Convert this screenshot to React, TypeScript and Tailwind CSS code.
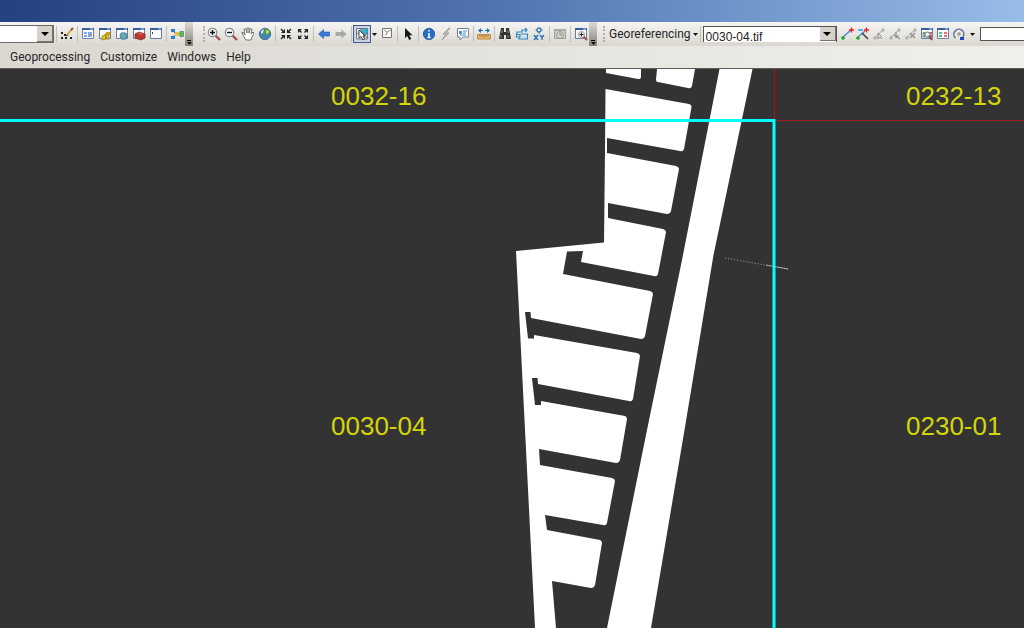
import type { ReactNode } from "react"

interface IconProps {
	children: ReactNode
}

interface ToolProps {
	label: string
	children: ReactNode
	active?: boolean
}

// ** Shared pieces
const Icon = ({ children }: IconProps) => (
	<svg viewBox="0 0 16 16" className="block h-4 w-4" fill="none" aria-hidden="true">
		{children}
	</svg>
)

const Tool = ({ label, children, active }: ToolProps) => (
	<button
		type="button"
		aria-label={label}
		className={
			active
				? "flex h-4 w-4 shrink-0 items-center justify-center bg-[#cbd3e4] outline outline-[#425c93]"
				: "flex h-4 w-4 shrink-0 items-center justify-center hover:bg-[#cbd3e4]"
		}>
		<Icon>{children}</Icon>
	</button>
)

const Separator = () => (
	<span className="flex h-4 w-[3px] shrink-0 justify-center">
		<span className="w-px bg-[#c2bfb8]" />
	</span>
)

const Grip = () => (
	<span className="h-4 w-0 shrink-0 border-l-2 border-dotted border-[#b4b1aa]" />
)

const Caret = () => (
	<svg viewBox="0 0 5 3" className="block h-[3px] w-[5px]" aria-hidden="true">
		<path d="M0 0H5L2.5 3Z" fill="#111" />
	</svg>
)

const ToolbarEnd = () => (
	<button
		type="button"
		aria-label="Toolbar options"
		className="flex h-6 w-2 shrink-0 flex-col items-center justify-end gap-px bg-linear-to-b from-[#dedbd5] to-[#85827c] pb-px">
		<span className="h-px w-1 bg-black" />
		<Caret />
	</button>
)

const ComboArrow = () => (
	<span className="pointer-events-none absolute inset-y-px right-px flex w-4 items-center justify-center border-r border-b border-[#77736c] bg-[#d6d2ca]">
		<svg viewBox="0 0 8 4" className="h-1 w-2" aria-hidden="true">
			<path d="M0 0H8L4 4Z" fill="#000" />
		</svg>
	</span>
)

// Small window frame used by several tools
const WindowFrame = () => (
	<>
		<path d="M2.5 2.5H13.5V12.5H2.5Z" fill="#fbfcff" stroke="#6e7d99" />
		<path d="M2 2H14V4H2Z" fill="#345da5" />
		<path d="M10 3H13" stroke="#b9d0f5" />
	</>
)

const Magnifier = ({ children }: IconProps) => (
	<>
		<path d="M9.5 9.5L14 14" stroke="#a4504a" strokeWidth="2.4" />
		<circle cx="6.5" cy="6.5" r="4.2" fill="#f7f9fb" stroke="#8b8e93" strokeWidth="1.3" />
		{children}
	</>
)

const Main = () => (
	<div className="flex items-center">
		<div className="relative h-[18px] w-[54px]">
			<select
				aria-label="Map scale"
				className="block h-full w-full appearance-none border border-l-0 border-[#6c6963] bg-white text-xs">
				<option></option>
			</select>
			<ComboArrow />
		</div>
		<div className="ml-px flex items-center gap-px">
			<Separator />
			<Tool label="Editor Toolbar">
				<path d="M2 6H4V8H2ZM2 11H4V13H2ZM6 11H8V13H6ZM11 11H13V13H11ZM5 8H7V10H5Z" fill="#222" />
				<path d="M8 9L13 3" stroke="#dca64b" strokeWidth="2" />
				<path d="M12 4L14 2" stroke="#a54841" strokeWidth="2" />
				<path d="M7 10L9 9" stroke="#333" />
			</Tool>
			<Separator />
			<Tool label="Table Of Contents">
				<WindowFrame />
				<path d="M4 7H7M8 7H12M4 10H7M8 10H12" stroke="#4c8cdf" strokeWidth="1.4" />
				<path d="M8 8.5H12" stroke="#d88a84" />
			</Tool>
			<Tool label="Catalog">
				<WindowFrame />
				<path d="M5 10L9 8V13L5 14ZM9 7H12V13H9Z" fill="#e5c42d" stroke="#8b7112" strokeWidth=".7" />
				<path d="M9 6H13V9H9Z" fill="#c9a119" />
			</Tool>
			<Tool label="Search">
				<WindowFrame />
				<circle cx="9.5" cy="10" r="3.6" fill="#4f9dd2" stroke="#5a7d8c" strokeWidth=".7" />
				<path d="M8 9L10 8L11 10L9 12Z" fill="#7fc06e" />
			</Tool>
			<Tool label="ArcToolbox">
				<WindowFrame />
				<path d="M4 8L8 6L14 8V12L10 14L4 12Z" fill="#b93832" stroke="#77201e" strokeWidth=".7" />
				<path d="M7 8L8 7L11 8V9" stroke="#ef8b83" strokeWidth=".8" />
			</Tool>
			<Tool label="Python">
				<WindowFrame />
				<path d="M4 6L5 7L4 8" stroke="#111" strokeWidth=".8" />
			</Tool>
			<Separator />
			<Tool label="ModelBuilder">
				<path d="M4 5L7 8H11M4 12L7 8" stroke="#555" />
				<path d="M2 3H6V6H2ZM2 10H6V13H2Z" fill="#2f7bd0" />
				<path d="M6 6H10V10H6Z" fill="#e2c63b" />
				<path d="M11 5.5H14.5V10.5H11Z" fill="#61ba69" stroke="#27803a" strokeWidth=".6" />
			</Tool>
		</div>
	</div>
)

const Tools = () => (
	<div className="flex items-center gap-px">
		<Grip />
		<Tool label="Zoom In">
			<Magnifier>
				<path d="M4 6.5H9M6.5 4V9" stroke="#111" strokeWidth="1.4" />
			</Magnifier>
		</Tool>
		<Tool label="Zoom Out">
			<Magnifier>
				<path d="M4 6.5H9" stroke="#111" strokeWidth="1.4" />
			</Magnifier>
		</Tool>
		<Tool label="Pan">
			<path
				d="M6 14L3 9L2 6L4 7L5 9L4 3L6 3L7 7V2H9V7L10 3H12L11 8L13 6L14 7L12 11L11 14Z"
				fill="#fff"
				stroke="#666"
				strokeWidth=".9"
			/>
		</Tool>
		<Tool label="Full Extent">
			<circle cx="8" cy="8" r="5.7" fill="#3f80cc" stroke="#31628f" strokeWidth=".8" />
			<path d="M7 3L12 3L13 7L10 10L8 8L5 7ZM3 9L7 11L8 13L5 12Z" fill="#4b9e49" />
			<path d="M4 5L7 3L6 7L4 8Z" fill="#d3eaff" />
			<path d="M9 4L12 5L11 8L9 7Z" fill="#e2d06c" />
		</Tool>
		<Separator />
		<Tool label="Fixed Zoom In">
			<path d="M3 3L6 6M13 3L10 6M3 13L6 10M13 13L10 10" stroke="#222" strokeWidth="1.4" />
			<path d="M7 3V7H3ZM9 3V7H13ZM7 13V9H3ZM9 13V9H13Z" fill="#222" />
		</Tool>
		<Tool label="Fixed Zoom Out">
			<path d="M4 4L6.5 6.5M12 4L9.5 6.5M4 12L6.5 9.5M12 12L9.5 9.5" stroke="#222" strokeWidth="1.4" />
			<path d="M3 3H7L3 7ZM13 3H9L13 7ZM3 13H7L3 9ZM13 13H9L13 9Z" fill="#222" />
		</Tool>
		<Separator />
		<Tool label="Previous Extent">
			<path d="M2.5 8L7.5 3.5V6H13.5V10H7.5V12.5Z" fill="#347bd5" stroke="#2459a7" strokeWidth=".6" />
		</Tool>
		<Tool label="Next Extent">
			<path d="M13.5 8L8.5 3.5V6H2.5V10H8.5V12.5Z" fill="#aaa9a5" />
		</Tool>
		<Separator />
		<Tool label="Select Features" active>
			<path d="M2.5 2.5H13.5V13H2.5Z" fill="#e8edf0" stroke="#73777d" />
			<path d="M6 3H13V8L10 10Z" fill="#29b8d5" />
			<path d="M3 8L6 6M6 3L13 12M10 13L13 6" stroke="#667" strokeWidth=".8" />
			<path d="M5 4L5 12L7 10.5L9 14L10.5 13L9 10H11Z" fill="#fff" stroke="#222" strokeWidth=".8" />
		</Tool>
		<button type="button" aria-label="Selection options" className="flex h-4 w-[7px] items-center justify-center">
			<Caret />
		</button>
		<Tool label="Clear Selected Features">
			<path d="M3.5 2.5H12.5V11.5H3.5Z" fill="#fafafa" stroke="#77736e" />
			<path d="M5 4L8 6L12 4M8 6V8L6 9" stroke="#77736e" strokeWidth=".8" />
		</Tool>
		<Separator />
		<Tool label="Select Elements">
			<path d="M5 2V12L7.2 10L9.2 14L11.2 13L9.3 9.2H12.5Z" fill="#171717" />
		</Tool>
		<Separator />
		<Tool label="Identify">
			<circle cx="8" cy="8" r="5.7" fill="#286bc4" stroke="#1d509c" strokeWidth=".8" />
			<path d="M8 7V11.5M6.5 11.5H9.5M8 4V5.5" stroke="#fff" strokeWidth="1.5" />
		</Tool>
		<Tool label="Hyperlink">
			<path d="M11 2L5 8H8L4 14L11 7H8L12 2Z" fill="#c2c1be" stroke="#97958f" strokeWidth=".8" />
		</Tool>
		<Tool label="HTML Popup">
			<path d="M2.5 2.5H13.5V11H8L5 14V11H2.5Z" fill="#fff" stroke="#788291" />
			<path d="M4 5H7V8H4Z" fill="#4d92d1" />
			<path d="M8 5H12M8 7H11M5 9H11" stroke="#438ac9" />
		</Tool>
		<Separator />
		<Tool label="Measure">
			<path d="M1.5 8.5H14.5V13H1.5Z" fill="#f1ba69" stroke="#a6783b" strokeWidth=".8" />
			<path d="M4 9V11M6 9V11M8 9V12M10 9V11M12 9V11" stroke="#765425" strokeWidth=".7" />
			<path d="M2 4.5L5 2V4H7V5H5V7ZM14 4.5L11 2V4H9V5H11V7Z" fill="#2274ba" />
		</Tool>
		<Separator />
		<Tool label="Find">
			<path d="M4 2H7V6H9V2H12L14 13H9V9H7V13H2Z" fill="#333" />
			<path d="M5 4V7M11 4V7M4 9V12M11 9V12" stroke="#a5a5a5" strokeWidth=".8" />
		</Tool>
		<Tool label="Find Route">
			<path d="M3 9V6H8V4H12M11 2L13 4L11 6M2.5 8.5H6V11H2.5ZM7 8H13.5V13H5V11" stroke="#3386bd" strokeWidth="1.2" />
			<path d="M8 9H12V12H8Z" fill="#cde4f2" />
		</Tool>
		<Tool label="Go To XY">
			<circle cx="8" cy="4" r="2" stroke="#2b79bc" strokeWidth="1.3" />
			<path d="M4.5 4H6M10 4H11.5M8 6V8" stroke="#2b79bc" />
			<path d="M3 9L7 14M7 9L3 14M9 9L11 11.5L13 9M11 11V14" stroke="#2370b5" strokeWidth="1.4" />
		</Tool>
		<Separator />
		<Tool label="Time Slider">
			<path d="M2.5 3.5H13.5V12.5H2.5Z" fill="#d2d0cb" stroke="#9d9b96" />
			<path d="M2 3H14V5H2Z" fill="#aaa8a3" />
			<circle cx="8" cy="9" r="3.5" stroke="#9b9994" />
			<path d="M8 7V9H10" stroke="#8f8d88" />
		</Tool>
		<Separator />
		<Tool label="Create Viewer Window">
			<WindowFrame />
			<path d="M10 10L14 14" stroke="#a44a43" strokeWidth="2" />
			<circle cx="8.5" cy="8.5" r="3" fill="#f6f6f6" stroke="#999" />
			<path d="M6.5 8.5H10.5M8.5 6.5V10.5" stroke="#222" />
		</Tool>
	</div>
)

const Georeferencing = () => (
	<div className="flex min-w-0 flex-1 items-center">
		<Grip />
		<button type="button" className="ml-1 flex shrink-0 items-center gap-0.5 text-xs">
			Georeferencing
			<Caret />
		</button>
		<span className="ml-0.5 h-4 w-px shrink-0 bg-[#c2bfb8]" />
		<div className="relative ml-0.5 h-4 w-[134px] shrink-0">
			<select
				aria-label="Georeferencing layer"
				className="block h-full w-full appearance-none border-t border-r border-l border-[#55524d] bg-white pt-1 pl-0.5 font-['Liberation_Sans',sans-serif] text-xs leading-3 text-[#222]">
				<option>0030-04.tif</option>
			</select>
			<ComboArrow />
		</div>
		<div className="ml-0.5 flex shrink-0 items-center">
			<Tool label="Add Control Points">
				<path d="M4 11L12 4" stroke="#3b8dde" strokeWidth="1.4" />
				<path d="M2 12H6M4 10V14" stroke="#20a430" strokeWidth="1.5" />
				<path d="M10 4H15M12.5 1.5V6.5" stroke="#f01c1c" strokeWidth="1.3" />
			</Tool>
			<Tool label="Auto Registration">
				<path d="M3 4H8M4 10L10 5" stroke="#3b8dde" strokeWidth="1.4" />
				<path d="M7 7L13 13" stroke="#444" strokeWidth="1.7" />
				<path d="M1 12H5M3 10V14" stroke="#20a430" strokeWidth="1.5" />
				<path d="M9 4H14M11.5 1.5V6.5" stroke="#f01c1c" strokeWidth="1.3" />
			</Tool>
			<Tool label="Select Link">
				<path d="M3 12L12 4M2 12H6M4 10V14M10 4H14M12 2V6" stroke="#aaa7a1" />
				<path d="M7 7V13L9 11L11 13M7 7L11 11" stroke="#93908b" />
			</Tool>
			<Tool label="Zoom To Selected Link">
				<path d="M3 12L12 4M2 12H6M4 10V14M10 4H14M12 2V6" stroke="#aaa7a1" />
				<path d="M9 6V12M7 9L13 13M8 10H12" stroke="#93908b" strokeWidth="1.2" />
			</Tool>
			<Tool label="Delete Link">
				<path d="M3 12L12 4M2 12H6M4 10V14M10 4H14M12 2V6" stroke="#aaa7a1" />
				<path d="M7 7L12 12M12 7L7 12" stroke="#93908b" strokeWidth="1.3" />
			</Tool>
			<Tool label="Viewer">
				<WindowFrame />
				<path d="M3 6H13V12H3Z" fill="#c2cdd0" />
				<path d="M4 7H6M4 10H6" stroke="#36a455" strokeWidth="1.5" />
				<path d="M11 7H13M11 10H13" stroke="#d83a3a" strokeWidth="1.5" />
				<circle cx="8.5" cy="8.5" r="2.5" fill="#eee" stroke="#777" />
				<path d="M10 10L13 14" stroke="#883f3b" strokeWidth="1.7" />
			</Tool>
			<Tool label="View Link Table">
				<WindowFrame />
				<path d="M4 7H7M4 10H7" stroke="#36a455" strokeWidth="1.7" />
				<path d="M9 7H12M9 10H12" stroke="#e04444" strokeWidth="1.7" />
			</Tool>
			<Tool label="Rotate">
				<path d="M4.5 12A5 5 0 1 1 12 11" stroke="#63779d" strokeWidth="1.6" />
				<path d="M9 11H13V14H9Z" fill="#2446bd" />
				<path d="M6 8H10M8 6V10" stroke="#8d896f" />
			</Tool>
			<button type="button" aria-label="Rotate options" className="ml-0.5 flex h-4 w-[7px] items-center justify-center">
				<Caret />
			</button>
		</div>
		<input
			type="text"
			aria-label="Rotation value"
			className="ml-1 h-3.5 min-w-0 flex-1 border border-r-0 border-[#55524d] bg-white px-1 text-xs"
		/>
	</div>
)

const menuItems = ["Geoprocessing", "Customize", "Windows", "Help"]

const MapView = () => (
	<main className="min-h-0 flex-1 border-t border-[#5d5c5a] bg-[#333]">
		<svg
			viewBox="0 69 1024 559"
			preserveAspectRatio="xMidYMin slice"
			className="block h-full w-full"
			role="img"
			aria-label="Map sheets">
			{/* Parcels */}
			<g fill="#fff">
				<path d="M606 69H641V77Q641 79 638 79L606 73Z" />
				<path d="M657 69H695L692 86Q691 89 688 88L658 82Q656 82 656 80Z" />
				<path d="M605.5 89L689 104Q692 105 691.5 107L684 149Q683 152 680 151L607 138V153L676 166Q679 167 679 169L671 211Q670 214 667 214L608 203V218L663 229Q666 230 666 232L658 274Q657 277 654 276L581 262L583 251L567 251.5L563 274L650 291Q653 292 653 294L645 336Q644 339 641 339L531 318L530.5 312H525L528 338.5H534V335L637 353Q640 354 640 356L633 399Q632 402 629 401L538 384L537.5 378H532L535 405H541V401L625 416Q627 417 627 419L620 460Q619 463 616 463L539 449L540 465L612 478Q615 479 615 481L607 523Q606 526 603 525L545 515L547 530L600 540Q602 541 602 543L595 585Q594 588 591 588L552 581L556 628H535L516 251L604 242.5L605 150Z" />
				{/* Road */}
				<path d="M719.5 69H752.5L713.5 255L684.5 430L651 628H607L647 430L682 260Z" />
			</g>
			<path d="M725 258L788 269" stroke="#aaa" strokeDasharray="1 2" />
			<path d="M766 265L788 269" stroke="#ccc" strokeWidth=".7" />

			{/* Sheet borders */}
			<path d="M774.5 69V120" stroke="#c5080c" />
			<path d="M775 120.5H1024" stroke="#9e1d20" />
			<path d="M0 120.5H774V628" fill="none" stroke="#00ffff" strokeWidth="3" />

			{/* Sheet numbers */}
			<g fill="#d4d40c" fontSize="26" className="font-['Liberation_Sans',sans-serif]">
				<text x="331" y="105">0032-16</text>
				<text x="906" y="105">0232-13</text>
				<text x="331" y="435">0030-04</text>
				<text x="906" y="435">0230-01</text>
			</g>
		</svg>
	</main>
)

const App = () => {
	return (
		<div className="flex h-screen flex-col overflow-hidden font-[Roboto,sans-serif] text-[#262626]">
			{/* Title bar */}
			<header className="h-[22px] shrink-0 bg-linear-to-r from-[#25417f] via-[#5276b2] to-[#98bde8]" />

			{/* Toolbars */}
			<div className="flex h-6 shrink-0 items-center bg-linear-to-b from-[#f6f5f3] to-[#dad7d0]">
				<Main />
				<ToolbarEnd />
				<span className="ml-2.5 flex">
					<Tools />
				</span>
				<span className="mr-1.5 flex">
					<ToolbarEnd />
				</span>
				<Georeferencing />
			</div>

			{/* Menu */}
			<nav className="flex h-[22px] shrink-0 items-center gap-2.5 bg-linear-to-r from-[#dad7d0] to-[#f0efec] px-2.5 text-xs">
				{menuItems.map((item) => (
					<button key={item} type="button">
						{item}
					</button>
				))}
			</nav>

			<MapView />
		</div>
	)
}
export default App
